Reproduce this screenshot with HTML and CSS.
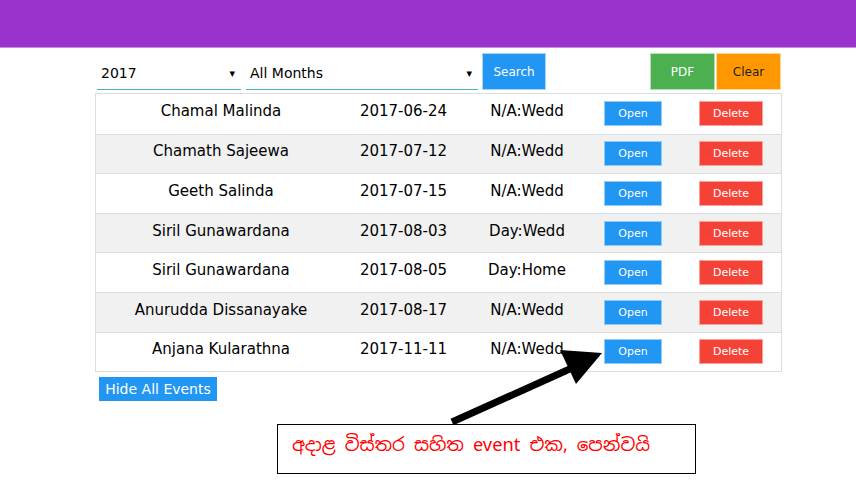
FILE: index.html
```html
<!DOCTYPE html>
<html>
<head>
<meta charset="utf-8">
<link rel="stylesheet" href="styles.css">
</head>
<body>
<header class="topbar"></header>
<main class="content">
  <div class="controls">
    <div class="select year"><span>2017</span><span class="caret">&#9662;</span></div>
    <div class="select month"><span>All Months</span><span class="caret">&#9662;</span></div>
    <button class="btn search">Search</button>
    <div class="spacer"></div>
    <button class="btn pdf">PDF</button>
    <button class="btn clear">Clear</button>
  </div>
  <div class="table">
    <div class="row"><div class="cell">Chamal Malinda</div><div class="cell">2017-06-24</div><div class="cell">N/A:Wedd</div><div class="act"><button class="sbtn open">Open</button></div><div class="act del"><button class="sbtn delete">Delete</button></div></div>
    <div class="row"><div class="cell">Chamath Sajeewa</div><div class="cell">2017-07-12</div><div class="cell">N/A:Wedd</div><div class="act"><button class="sbtn open">Open</button></div><div class="act del"><button class="sbtn delete">Delete</button></div></div>
    <div class="row"><div class="cell">Geeth Salinda</div><div class="cell">2017-07-15</div><div class="cell">N/A:Wedd</div><div class="act"><button class="sbtn open">Open</button></div><div class="act del"><button class="sbtn delete">Delete</button></div></div>
    <div class="row"><div class="cell">Siril Gunawardana</div><div class="cell">2017-08-03</div><div class="cell">Day:Wedd</div><div class="act"><button class="sbtn open">Open</button></div><div class="act del"><button class="sbtn delete">Delete</button></div></div>
    <div class="row"><div class="cell">Siril Gunawardana</div><div class="cell">2017-08-05</div><div class="cell">Day:Home</div><div class="act"><button class="sbtn open">Open</button></div><div class="act del"><button class="sbtn delete">Delete</button></div></div>
    <div class="row"><div class="cell">Anurudda Dissanayake</div><div class="cell">2017-08-17</div><div class="cell">N/A:Wedd</div><div class="act"><button class="sbtn open">Open</button></div><div class="act del"><button class="sbtn delete">Delete</button></div></div>
    <div class="row"><div class="cell">Anjana Kularathna</div><div class="cell">2017-11-11</div><div class="cell">N/A:Wedd</div><div class="act"><button class="sbtn open">Open</button></div><div class="act del"><button class="sbtn delete">Delete</button></div></div>
  </div>
  <button class="btn hide">Hide All Events</button>
</main>
<svg class="arrow" width="180" height="90" viewBox="0 0 180 90">
  <line x1="2" y1="82" x2="122" y2="28" stroke="#000" stroke-width="7"/>
  <polygon points="152,13 110,10 126,44" fill="#000"/>
</svg>
<div class="note">අදාළ විස්තර සහිත event එක, පෙන්වයි</div>
</body>
</html>
```
FILE: styles.css
```css
* { box-sizing: border-box; }
html, body { margin: 0; padding: 0; background: #fff; }
body {
  font-family: "DejaVu Sans", Verdana, sans-serif;
  color: #000;
  width: 856px;
  height: 483px;
  position: relative;
  overflow: hidden;
}
.topbar {
  height: 48px;
  background: #9933cc;
  border-bottom: 1px solid #c58fdf;
}
.content {
  margin-left: 95px;
  width: 687px;
}
.controls {
  display: flex;
  align-items: flex-start;
  height: 45px;
  padding-top: 5px;
}
.select {
  display: flex;
  align-items: center;
  justify-content: space-between;
  height: 37px;
  border-bottom: 1px solid #4db6ac;
  font-size: 14px;
  padding: 4px 6px 0 4px;
}
.select.year { width: 144px; margin-left: 2px; }
.select.month { width: 232px; margin-left: 5px; padding-left: 4px; }
.caret { font-size: 11px; }
.btn {
  border: 1px solid rgba(255,255,255,0.6);
  font-family: "DejaVu Sans", Verdana, sans-serif;
  font-size: 12px;
  color: #fff;
  height: 37px;
  padding: 0;
  margin: 0;
}
.search { width: 64px; background: #2196f3; margin-left: 4px; }
.spacer { flex: 1; }
.pdf { width: 65px; background: #4caf50; }
.clear { width: 65px; background: #ff9800; color: #222; margin-left: 1px; margin-right: 1px; }
.table {
  border: 1px solid #dddddd;
  width: 687px;
}
.row {
  display: grid;
  grid-template-columns: 250px 115px 132px 80px 108px;
  height: 39.6px;
  align-items: center;
  border-top: 1px solid #dddddd;
}
.row:first-child { border-top: none; }
.row:nth-child(even) { background: #f1f1f1; }
.cell {
  text-align: center;
  font-size: 15px;
  padding-bottom: 5px;
  white-space: nowrap;
}
.act { display: flex; justify-content: center; }
.act.del { padding-left: 8px; }
.sbtn {
  border: 1px solid rgba(255,255,255,0.5);
  font-family: "DejaVu Sans", Verdana, sans-serif;
  font-size: 11px;
  color: #fff;
  height: 25px;
  padding: 0;
  margin: 0;
}
.open { width: 58px; background: #2196f3; }
.delete { width: 64px; background: #f44336; }
.hide {
  display: block;
  margin-top: 5px;
  margin-left: 4px;
  width: 118px;
  height: 24px;
  background: #2196f3;
  border: none;
  font-size: 14px;
}
.arrow {
  position: absolute;
  left: 450px;
  top: 340px;
}
.note {
  position: absolute;
  left: 277px;
  top: 424px;
  width: 419px;
  height: 50px;
  border: 1px solid #000;
  background: #fff;
  color: #ff0000;
  font-family: "Noto Sans Sinhala", "Iskoola Pota", "DejaVu Sans", sans-serif;
  font-size: 18.3px;
  padding: 8px 0 0 14px;
}
```
